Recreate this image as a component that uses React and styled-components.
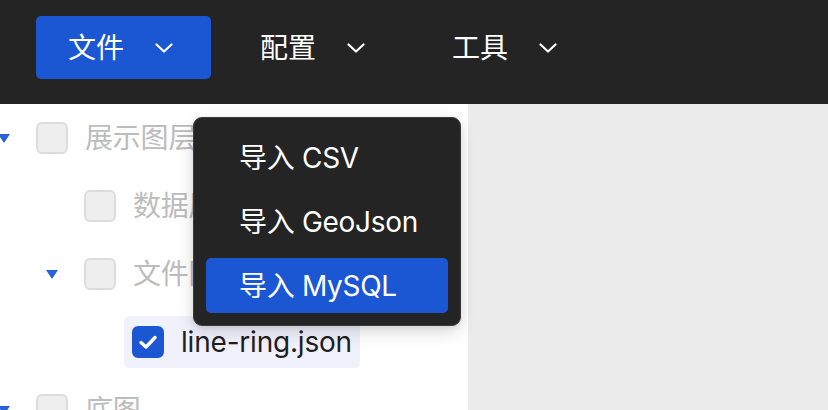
import React from "react";
import styled, { createGlobalStyle } from "styled-components";

const Global = createGlobalStyle`
  html, body { margin: 0; padding: 0; }
  body {
    width: 828px; height: 410px; overflow: hidden;
    font-family: Inter, "Noto Sans CJK SC", sans-serif;
    background: #ececec;
  }
  * { box-sizing: border-box; }
`;

const Page = styled.div`
  position: relative;
  width: 828px;
  height: 410px;
  overflow: hidden;
  display: flex;
  flex-direction: column;
`;

const TopBar = styled.div`
  height: 104px;
  flex: none;
  background: #242424;
  display: flex;
  align-items: flex-start;
  gap: 17px;
  padding: 16px 36px 0;
`;

const MenuButton = styled.div`
  height: 63px;
  display: flex;
  align-items: center;
  gap: 31px;
  padding: 0 38px 0 32px;
  border-radius: 5px;
  background: ${(p) => (p.$active ? "#1c57d3" : "transparent")};
  color: #fff;
  font-size: 28px;
  line-height: 1;
`;

const Chevron = () => (
  <svg width="18" height="10" viewBox="0 0 18 10" fill="none">
    <path d="M1.5 1.5 L9 8.5 L16.5 1.5" stroke="#fff" strokeWidth="2.2" strokeLinecap="round" strokeLinejoin="round" />
  </svg>
);

const Body = styled.div`
  flex: 1;
  display: flex;
`;

const LeftPanel = styled.div`
  width: 468px;
  background: #fff;
  padding-top: 8px;
  overflow: hidden;
`;

const RightPanel = styled.div`
  flex: 1;
  background: #ececec;
`;

const Tree = styled.div`
  margin-left: -20px;
  display: flex;
  flex-direction: column;
  gap: 16px;
`;

const Row = styled.div`
  display: flex;
  align-items: center;
  height: 52px;
  padding-left: ${(p) => p.$level * 48}px;
`;

const Switcher = styled.div`
  width: 48px;
  height: 52px;
  flex: none;
  display: flex;
  align-items: center;
  justify-content: center;
`;

const NodeContent = styled.div`
  height: 52px;
  display: flex;
  align-items: center;
  gap: 17px;
  padding: 0 8px 0 8px;
  border-radius: 5px;
  background: ${(p) => (p.$selected ? "#f1f1fc" : "transparent")};
`;

const Box = styled.div`
  width: 32px;
  height: 32px;
  flex: none;
  border-radius: 6px;
  display: flex;
  align-items: center;
  justify-content: center;
  background: ${(p) => (p.$checked ? "#1c57d3" : "#eeeeee")};
  border: 2px solid ${(p) => (p.$checked ? "#1c57d3" : "#dcdcdc")};
`;

const Title = styled.span`
  font-size: 28px;
  line-height: 1;
  white-space: nowrap;
  letter-spacing: -0.2px;
  color: ${(p) => (p.$disabled ? "#bcbcbc" : "#1f1f1f")};
`;

const Caret = () => (
  <svg width="12" height="9" viewBox="0 0 12 9">
    <path d="M0 0 H12 L6 9 Z" fill="#2b62d9" />
  </svg>
);

const Check = () => (
  <svg width="20" height="16" viewBox="0 0 20 16" fill="none">
    <path d="M3 8.5 L8 13 L17 3.5" stroke="#fff" strokeWidth="3.4" strokeLinecap="round" strokeLinejoin="round" />
  </svg>
);

const Dropdown = styled.div`
  position: absolute;
  left: 193px;
  top: 117px;
  width: 268px;
  padding: 12px;
  background: #242424;
  border-radius: 9px;
  border: 1px solid #3a3a3a;
  box-shadow: 0 6px 18px rgba(0, 0, 0, 0.14), 0 2px 6px rgba(0, 0, 0, 0.08);
  display: flex;
  flex-direction: column;
  gap: 9px;
`;

const DropItem = styled.div`
  height: 55px;
  display: flex;
  align-items: center;
  padding-left: 33px;
  border-radius: 5px;
  color: #fff;
  font-size: 28px;
  line-height: 1;
  white-space: nowrap;
  letter-spacing: -0.3px;
  background: ${(p) => (p.$active ? "#1c57d3" : "transparent")};
`;

const nodes = [
  { level: 0, caret: true, title: "展示图层", disabled: true },
  { level: 1, caret: false, title: "数据层", disabled: true },
  { level: 1, caret: true, title: "文件图层", disabled: true },
  { level: 2, caret: false, title: "line-ring.json", checked: true, selected: true },
  { level: 0, caret: true, title: "底图", disabled: true },
];

export default function App() {
  return (
    <Page>
      <Global />
      <TopBar>
        <MenuButton $active>
          <span>文件</span>
          <Chevron />
        </MenuButton>
        <MenuButton>
          <span>配置</span>
          <Chevron />
        </MenuButton>
        <MenuButton>
          <span>工具</span>
          <Chevron />
        </MenuButton>
      </TopBar>
      <Body>
        <LeftPanel>
          <Tree>
            {nodes.map((n, i) => (
              <Row key={i} $level={n.level}>
                <Switcher>{n.caret && <Caret />}</Switcher>
                <NodeContent $selected={n.selected}>
                  <Box $checked={n.checked}>{n.checked && <Check />}</Box>
                  <Title $disabled={n.disabled}>{n.title}</Title>
                </NodeContent>
              </Row>
            ))}
          </Tree>
        </LeftPanel>
        <RightPanel />
      </Body>
      <Dropdown>
        <DropItem>导入 CSV</DropItem>
        <DropItem>导入 GeoJson</DropItem>
        <DropItem $active>导入 MySQL</DropItem>
      </Dropdown>
    </Page>
  );
}
